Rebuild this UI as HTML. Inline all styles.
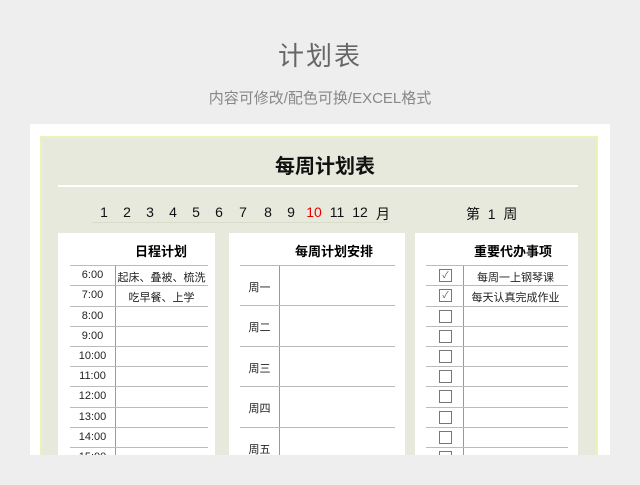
<html><head><style>
body{margin:0;width:640px;height:485px;background:#eee;font-family:"Liberation Sans","Noto Sans CJK SC",sans-serif;position:relative;overflow:hidden}
.a{position:absolute}
.t{left:0;width:640px;text-align:center}
.ln{position:absolute;height:1px;background:#bbb}
.vl{position:absolute;width:1px;background:#999}
.c{position:absolute;font-size:11px;color:#222;text-align:center}
.m{position:absolute;top:204px;width:24px;margin-left:-12px;text-align:center;font-size:14px;color:#111}
.cb{position:absolute;width:11px;height:11px;border:1px solid #777;background:#fff;font-size:9px;line-height:11px;text-align:center;color:#555}
</style></head><body>
<div class="a t" style="top:36px;font-size:26px;color:#666;letter-spacing:2px">计划表</div>
<div class="a t" style="top:87px;font-size:15px;color:#888">内容可修改/配色可换/EXCEL格式</div>
<div class="a" style="left:30px;top:124px;width:580px;height:331px;background:#fff"></div>
<div class="a" style="left:40px;top:136px;width:558px;height:319px;background:#e6e9dc;border-left:2px solid #e6f5b8;border-right:2px solid #e6f5b8;border-top:2px solid #e6f5b8;box-sizing:border-box"></div>
<div class="a" style="left:0;width:650px;top:150px;text-align:center;font-size:20px;font-weight:bold;color:#111">每周计划表</div>
<div class="a" style="left:58px;top:185px;width:520px;height:2px;background:#fff"></div>
<div class="a" style="left:92px;top:222px;width:298px;height:1px;background:#d8dccb"></div>
<div id="M"></div>
<div class="a" style="left:466px;top:204px;font-size:14px;color:#111;white-space:pre">第  1  周</div>
<div class="a" style="left:58px;top:233px;width:157px;height:230px;background:#fff"></div>
<div class="a" style="left:229px;top:233px;width:176px;height:230px;background:#fff"></div>
<div class="a" style="left:415px;top:233px;width:163px;height:230px;background:#fff"></div>
<div class="a" style="left:135px;top:241px;font-size:13px;font-weight:bold">日程计划</div>
<div class="a" style="left:295px;top:241px;font-size:13px;font-weight:bold">每周计划安排</div>
<div class="a" style="left:474px;top:241px;font-size:13px;font-weight:bold">重要代办事项</div>
<div class="vl" style="left:115px;top:265px;height:190px"></div>
<div class="vl" style="left:279px;top:265px;height:190px"></div>
<div class="vl" style="left:463px;top:265px;height:190px"></div>
<div id="L"></div>
<script>
var mx=[104,127,150,173,196,219,243,268,291,314,337,360,383],ml=['1','2','3','4','5','6','7','8','9','10','11','12','月'],s='';
mx.forEach(function(x,i){s+='<div class="m" style="left:'+x+'px;'+(i==9?'color:#e00':'')+'">'+ml[i]+'</div>';});
document.getElementById('M').innerHTML=s;
var r=[265,285,306,326,346,366,386,407,427,447];var h='';
var tm=['6:00','7:00','8:00','9:00','10:00','11:00','12:00','13:00','14:00','15:00'];
r.forEach(function(y,i){h+='<div class="ln" style="left:70px;top:'+y+'px;width:138px"></div><div class="ln" style="left:426px;top:'+y+'px;width:142px"></div>';
h+='<div class="c" style="left:70px;width:45px;top:'+(y+4)+'px">'+tm[i]+'</div>';
h+='<div class="cb" style="left:439px;top:'+(y+4)+'px">'+(i<2?'✓':'')+'</div>';});
h+='<div class="c" style="left:115px;width:93px;top:269px">起床、叠被、梳洗</div><div class="c" style="left:115px;width:93px;top:289px">吃早餐、上学</div>';
h+='<div class="c" style="left:463px;width:105px;top:269px">每周一上钢琴课</div><div class="c" style="left:463px;width:105px;top:289px">每天认真完成作业</div>';
var m=[265,305,346,386,427],d=['周一','周二','周三','周四','周五'];
m.forEach(function(y,i){h+='<div class="ln" style="left:240px;top:'+y+'px;width:155px"></div><div class="c" style="left:240px;width:39px;top:'+(y+14)+'px">'+d[i]+'</div>';});
document.getElementById('L').innerHTML=h;
</script>
<div class="a" style="left:0;top:455px;width:640px;height:30px;background:#eee"></div>
</body></html>
